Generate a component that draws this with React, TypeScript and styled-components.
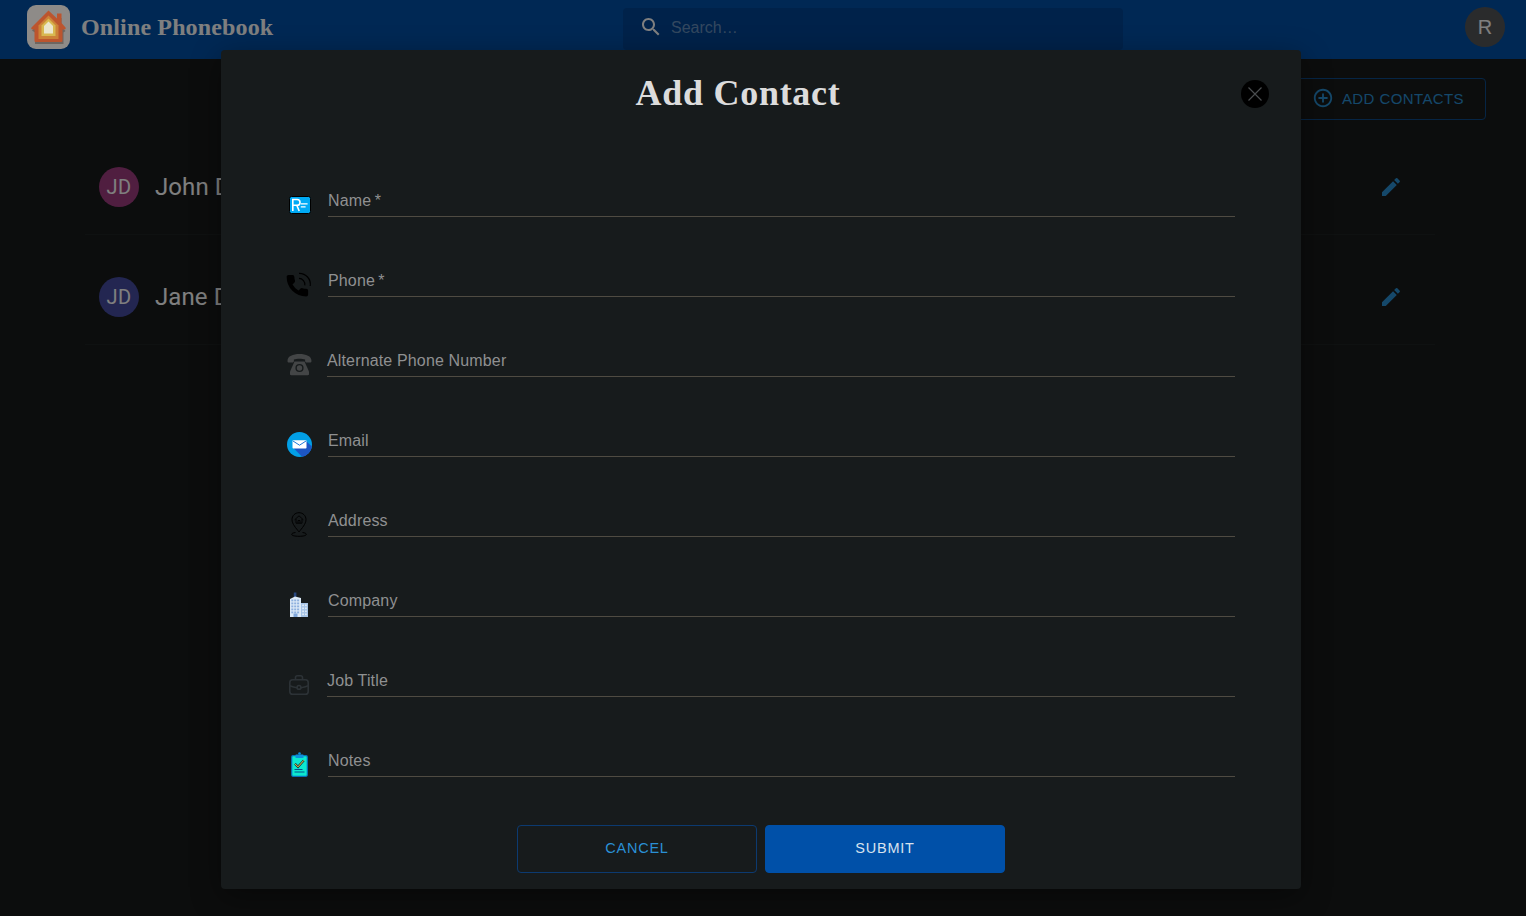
import React from "react";
import styled, { createGlobalStyle } from "styled-components";

const Global = createGlobalStyle`
  html, body { margin: 0; padding: 0; height: 100%; background: #181b1b; }
  body { font-family: "Liberation Sans", Arial, sans-serif; overflow: hidden; }
  * { box-sizing: border-box; }
`;

const Page = styled.div`
  position: relative;
  width: 1526px;
  height: 916px;
  background: #181b1b;
  overflow: hidden;
`;
const AppBar = styled.header`
  height: 59px;
  background: #0050a8;
  display: flex;
  align-items: flex-start;
  padding: 0 21px 0 27px;
`;
const Brand = styled.div`
  flex: 0 0 596px;
  display: flex;
  align-items: center;
  gap: 11px;
  height: 54px;
`;
const Logo = styled.svg`
  position: relative;
  z-index: 1;
  width: 43px;
  height: 44px;
  display: block;
`;
const BrandName = styled.span`
  font: bold 24px "Liberation Serif", "Times New Roman", serif;
  color: #fff;
  letter-spacing: 0.14px;
`;
const Search = styled.div`
  width: 500px;
  height: 42px;
  margin-top: 8px;
  display: flex;
  align-items: flex-start;
  gap: 8px;
  padding: 7px 0 0 16px;
  background: #004494;
  border-radius: 4px;
`;
const SearchIcon = styled.svg`
  width: 24px;
  height: 24px;
  fill: #fff;
  flex: none;
`;
const SearchText = styled.span`
  font-size: 16px;
  line-height: 25px;
  color: rgba(255, 255, 255, 0.42);
`;
const UserAvatar = styled.div`
  margin-left: auto;
  margin-top: 7px;
  width: 40px;
  height: 40px;
  border-radius: 50%;
  background: #555759;
  color: #fff;
  font-size: 20px;
  display: flex;
  align-items: center;
  justify-content: center;
`;
const Main = styled.main`
  padding: 19px 40px 0 85px;
`;
const Actions = styled.div`
  display: flex;
  justify-content: flex-end;
`;
const AddButton = styled.button`
  height: 42px;
  padding: 0 21px 2px;
  display: flex;
  align-items: center;
  gap: 8px;
  background: transparent;
  border: 1px solid #0c4a8a;
  border-radius: 4px;
  color: #2a90d5;
  font: 15px "Liberation Sans", Arial, sans-serif;
  letter-spacing: 0.4px;
`;
const AddIcon = styled.svg`
  width: 22px;
  height: 22px;
  fill: #2a90d5;
`;
const List = styled.ul`
  list-style: none;
  margin: 5px 51px 0 0;
  padding: 0;
`;
const ContactRow = styled.li`
  height: 110px;
  padding: 14px 32px 0 14px;
  display: flex;
  align-items: center;
  gap: 16px;
  border-bottom: 1px solid #1f2222;
`;
const ContactAvatar = styled.div<{ $bg: string }>`
  width: 40px;
  height: 40px;
  border-radius: 50%;
  background: ${(p) => p.$bg};
  color: #fff;
  font: 20px Roboto, "Noto Sans", sans-serif;
  letter-spacing: 0.4px;
  display: flex;
  align-items: center;
  justify-content: center;
`;
const ContactName = styled.span`
  flex: 1;
  font: 24px Roboto, "Noto Sans", sans-serif;
  letter-spacing: 0.08px;
  color: #fff;
`;
const EditIcon = styled.svg`
  width: 24px;
  height: 24px;
  fill: #2a90d5;
`;
const Backdrop = styled.div`
  position: absolute;
  inset: 0;
  background: rgba(0, 0, 0, 0.5);
`;
const Modal = styled.section`
  position: absolute;
  z-index: 2;
  left: 221px;
  top: 50px;
  width: 1080px;
  height: 839px;
  background: #171b1c;
  border-radius: 4px;
  box-shadow: 0 8px 30px rgba(0, 0, 0, 0.4);
  padding: 0 66px;
`;
const Header = styled.div`
  height: 87px;
  display: flex;
  justify-content: center;
  padding: 22px 46px 0 0;
`;
const Title = styled.h2`
  margin: 0;
  font: bold 36px/42px "Liberation Serif", "Times New Roman", serif;
  letter-spacing: 0.72px;
  color: #dcdcdc;
`;
const CloseButton = styled.button`
  position: absolute;
  left: 1020px;
  top: 30px;
  width: 28px;
  height: 28px;
  padding: 0;
  border: 0;
  border-radius: 50%;
  background: #000;
  display: flex;
  align-items: center;
  justify-content: center;
`;
const CloseIcon = styled.svg`
  width: 16px;
  height: 16px;
  stroke: #4a4d4f;
  stroke-width: 1.2;
  fill: none;
`;
const Row = styled.div`
  height: 80px;
  display: flex;
  align-items: flex-end;
`;
const IconBox = styled.div`
  width: 25px;
  height: 25px;
  flex: none;
  display: flex;
  align-items: center;
  justify-content: center;
`;
const Field = styled.label<{ $tight?: boolean }>`
  flex: 1;
  height: 28px;
  margin-left: ${(p) => (p.$tight ? "15px" : "16px")};
  border-bottom: 1px solid #4f4b42;
  font-size: 16px;
  line-height: 24px;
  letter-spacing: 0.15px;
  color: #8f9091;
`;
const Buttons = styled.div`
  margin-top: 48px;
  display: flex;
  justify-content: center;
  gap: 8px;
`;
const DialogButton = styled.button<{ $primary?: boolean }>`
  width: 240px;
  height: 48px;
  padding-bottom: 3px;
  border-radius: 4px;
  font: 14.5px "Liberation Sans", Arial, sans-serif;
  letter-spacing: 0.75px;
  border: 1px solid ${(p) => (p.$primary ? "#0050a8" : "#0c3a70")};
  background: ${(p) => (p.$primary ? "#0050a8" : "transparent")};
  color: ${(p) => (p.$primary ? "#d8e2ee" : "#2a90d5")};
`;

const Svg = styled.svg<{ $nudge?: boolean }>`
  display: block;
  overflow: visible;
  margin-left: ${(p) => (p.$nudge ? "-1px" : "0")};
`;

const CardGlyph = () => (
  <Svg width="22" height="18" viewBox="0 0 22 18">
    <rect x="0.500" y="0.500" width="21" height="17" rx="2" fill="#00aaf5" stroke="#000" />
    <path d="M3.800 15V3.500h4.300a2.900 2.900 0 0 1 0 5.800H3.800M7.800 9.300 10.200 15" fill="none" stroke="#fff" strokeWidth="1.600" />
    <path d="M11.800 7.800h6.800M11.800 10.800h4.800" stroke="#fff" strokeWidth="1.300" />
  </Svg>
);
const PhoneGlyph = () => (
  <Svg width="25" height="25" viewBox="0 0 25 25">
    <g transform="translate(-2.800 0.500) scale(1.100)">
      <path
        fill="#000"
        stroke="#000"
        strokeWidth="1.500"
        strokeLinejoin="round"
        d="M6.620 10.790c1.440 2.830 3.760 5.140 6.590 6.590l2.200-2.200c.27-.27.67-.36 1.020-.24 1.120.37 2.330.57 3.570.57.55 0 1 .45 1 1V20c0 .55-.45 1-1 1-9.390 0-17-7.610-17-17 0-.55.45-1 1-1h3.500c.55 0 1 .45 1 1 0 1.250.2 2.450.57 3.570.11.35.03.74-.25 1.020l-2.200 2.200z"
      />
    </g>
    <path d="M12 6.400a6 6 0 0 1 5.800 6.900" fill="none" stroke="#000" strokeWidth="1.200" />
    <path d="M12 1.300a11 11 0 0 1 11.200 12.700" fill="none" stroke="#000" strokeWidth="1.200" />
  </Svg>
);
const TelGlyph = () => (
  <Svg $nudge width="25" height="23" viewBox="0 0 25 23">
    <path d="M0.500 8C0.500 3 6 1 12.500 1S24.500 3 24.500 8c0 1-.6 1.600-1.600 1.600h-3.300c-.9 0-1.500-.6-1.500-1.500V6.500c-3-1-8.200-1-11.200 0v1.600c0 .9-.6 1.500-1.500 1.500H2.100C1.100 9.600.5 9 .5 8z" fill="#434546" />
    <path d="M7.500 8.500h10l4.500 10v2.600c0 .8-.5 1.200-1.200 1.200H4.200c-.7 0-1.200-.4-1.200-1.200v-2.600z" fill="#434546" />
    <circle cx="12.500" cy="15" r="3.400" fill="none" stroke="#171b1c" strokeWidth="1.400" />
  </Svg>
);
const MailGlyph = () => (
  <Svg width="25" height="25" viewBox="0 0 25 25">
    <circle cx="12.500" cy="12.500" r="12.500" fill="#029fe6" />
    <path d="M6 15.500 19 9 24.900 14.500A12.500 12.500 0 0 1 15 24.800z" fill="#1c55c4" />
    <rect x="5.500" y="8.200" width="14" height="8.400" rx="0.800" fill="#fff" />
    <path d="M6 9 12.500 13.200 19 9" fill="none" stroke="#1b78d8" strokeWidth="1" />
  </Svg>
);
const PinGlyph = () => (
  <Svg $nudge width="16" height="25" viewBox="0 0 16 25">
    <path d="M8 .7c3.900 0 7 3 7 6.900 0 4.300-4 8.500-7 12.300-3-3.800-7-8-7-12.300C1 3.700 4.100.7 8 .7z" fill="none" stroke="#000" strokeWidth="1" />
    <path d="M3.600 7.800 8 3.800l4.400 4M5 7v4.200h6V7M7 11.200V8.500h2v2.700" fill="none" stroke="#000" strokeWidth="0.900" />
    <path d="M4.500 20.500C2 20.800.7 21.500.7 22.400c0 1.100 3 1.900 7.300 1.900s7.300-.8 7.300-1.900c0-.9-1.300-1.600-3.800-1.900" fill="none" stroke="#000" strokeWidth="1" />
  </Svg>
);
const BuildingGlyph = () => (
  <Svg $nudge width="20" height="25" viewBox="0 0 20 25">
    <rect x="4.800" y="0.500" width="2.600" height="4.500" fill="#27467e" />
    <path d="M1 7 6 4.500 12 6V25H1z" fill="#dce9f7" />
    <rect x="12" y="11" width="7" height="14" fill="#a6c4e6" />
    {[7.500, 10.500, 13.500, 16.500, 19.500].map((y) =>
      [2.300, 5.200, 8.100].map((x) => <rect key={`${x}-${y}`} x={x} y={y} width="2" height="1.800" fill="#8db0de" />)
    )}
    {[12.500, 15.500, 18.500, 21.500].map((y) =>
      [13.200, 16].map((x) => <rect key={`${x}-${y}`} x={x} y={y} width="1.800" height="1.600" fill="#dfeaf6" />)
    )}
    <rect x="4.500" y="21.500" width="4" height="3.500" fill="#7fa6da" />
  </Svg>
);
const CaseGlyph = () => (
  <Svg $nudge width="20" height="20" viewBox="0 0 20 20">
    <g fill="none" stroke="#2c3236" strokeWidth="1.600">
      <rect x="0.800" y="4.700" width="18.400" height="14.500" rx="2.800" />
      <path d="M6.500 4.500V2.500c0-1 .7-1.700 1.800-1.700h3.400c1.100 0 1.800.7 1.800 1.700v2M.8 10.800c3 1.400 5.500 1.800 7.300 1.900M19.200 10.800c-3 1.400-5.500 1.800-7.300 1.900" />
      <circle cx="10" cy="12.400" r="1.900" />
    </g>
  </Svg>
);
const NoteGlyph = () => (
  <Svg width="17" height="25" viewBox="0 0 17 25">
    <rect x="0.700" y="3.700" width="15.600" height="20.600" rx="1.200" fill="#0ce8cf" stroke="#0670b8" strokeWidth="1.200" />
    <rect x="4.500" y="2.400" width="8" height="3.600" rx="0.600" fill="#0d8fdc" />
    <circle cx="8.500" cy="1.500" r="1.300" fill="#0d8fdc" />
    <path d="M4 11.800 7 14.800 12.800 8.400" fill="none" stroke="#1b2a36" strokeWidth="2.200" />
    <path d="M4 11.800 7 14.800 12.800 8.400" fill="none" stroke="#f2d54a" strokeWidth="1" />
    <path d="M3.500 17.500h8M3.500 20h10" stroke="#06508a" strokeWidth="1" />
  </Svg>
);

const rows: { label: string; icon: React.ReactNode; tight?: boolean }[] = [
  { label: "Name\u2009*", icon: <CardGlyph /> },
  { label: "Phone\u2009*", icon: <PhoneGlyph /> },
  { label: "Alternate Phone Number", icon: <TelGlyph />, tight: true },
  { label: "Email", icon: <MailGlyph /> },
  { label: "Address", icon: <PinGlyph /> },
  { label: "Company", icon: <BuildingGlyph /> },
  { label: "Job Title", icon: <CaseGlyph />, tight: true },
  { label: "Notes", icon: <NoteGlyph /> },
];
const contacts = [
  { name: "John Doe", bg: "#a03c80" },
  { name: "Jane Doe", bg: "#464ca2" },
];
const EDIT = "M3 17.250V21h3.750L17.810 9.940l-3.750-3.750L3 17.250zM20.710 7.040c.39-.39.39-1.020 0-1.410l-2.340-2.340a.9959.9959 0 0 0-1.410 0l-1.830 1.830 3.750 3.750 1.830-1.830z";

export default function App() {
  return (
    <Page>
      <Global />
      <AppBar>
        <Brand>
          <Logo viewBox="0 0 43 44">
            <rect width="43" height="44" rx="9" fill="#8e8b88" />
            <path d="M5 25.500 21.500 9.500l8.500 8V13h4.500v9l4 4-2 1.500v11.500H8V27.500z" fill="#6e6660" />
            <path d="M4.500 22.500 21.500 5.500l8.500 8V8.500h4.500v9.500l4 4.500c.6.900 0 2-1 2h-2v11c0 1-.7 1.500-1.500 1.500H9c-.9 0-1.500-.5-1.500-1.500v-11h-2c-1 0-1.600-1-1-2z" fill="#bc552e" />
            <path d="M21.500 10.500 31.500 20.500v13.500h-20V20.500z" fill="#cc8238" />
            <path d="M21.500 13.500 28.500 20.500v10.500h-14V20.500z" fill="#d8b850" />
            <path d="M21.500 16.500 26 21v7.500h-9V21z" fill="#ebe6cd" />
          </Logo>
          <BrandName>Online Phonebook</BrandName>
        </Brand>
        <Search>
          <SearchIcon viewBox="0 0 24 24">
            <path d="M15.500 14h-.79l-.28-.27C15.410 12.590 16 11.110 16 9.500 16 5.910 13.090 3 9.500 3S3 5.910 3 9.500 5.910 16 9.500 16c1.610 0 3.090-.59 4.230-1.570l.27.28v.79l5 4.990L20.490 19l-4.990-5zm-6 0C7.010 14 5 11.990 5 9.500S7.010 5 9.500 5 14 7.010 14 9.500 11.990 14 9.500 14z" />
          </SearchIcon>
          <SearchText>Search…</SearchText>
        </Search>
        <UserAvatar>R</UserAvatar>
      </AppBar>
      <Main>
        <Actions>
          <AddButton>
            <AddIcon viewBox="0 0 24 24">
              <path d="M13 7h-2v4H7v2h4v4h2v-4h4v-2h-4V7zm-1-5C6.480 2 2 6.480 2 12s4.480 10 10 10 10-4.480 10-10S17.520 2 12 2zm0 18c-4.410 0-8-3.590-8-8s3.590-8 8-8 8 3.590 8 8-3.590 8-8 8z" />
            </AddIcon>
            ADD CONTACTS
          </AddButton>
        </Actions>
        <List>
          {contacts.map((c) => (
            <ContactRow key={c.name}>
              <ContactAvatar $bg={c.bg}>JD</ContactAvatar>
              <ContactName>{c.name}</ContactName>
              <EditIcon viewBox="0 0 24 24">
                <path d={EDIT} />
              </EditIcon>
            </ContactRow>
          ))}
        </List>
      </Main>
      <Backdrop />
      <Modal>
        <Header>
          <Title>Add Contact</Title>
        </Header>
        <CloseButton aria-label="Close">
          <CloseIcon viewBox="0 0 16 16">
            <path d="M1.500 1.500 14.500 14.500M14.500 1.500 1.500 14.500" />
          </CloseIcon>
        </CloseButton>
        {rows.map((r) => (
          <Row key={r.label}>
            <IconBox>{r.icon}</IconBox>
            <Field $tight={r.tight}>{r.label}</Field>
          </Row>
        ))}
        <Buttons>
          <DialogButton>CANCEL</DialogButton>
          <DialogButton $primary>SUBMIT</DialogButton>
        </Buttons>
      </Modal>
    </Page>
  );
}
